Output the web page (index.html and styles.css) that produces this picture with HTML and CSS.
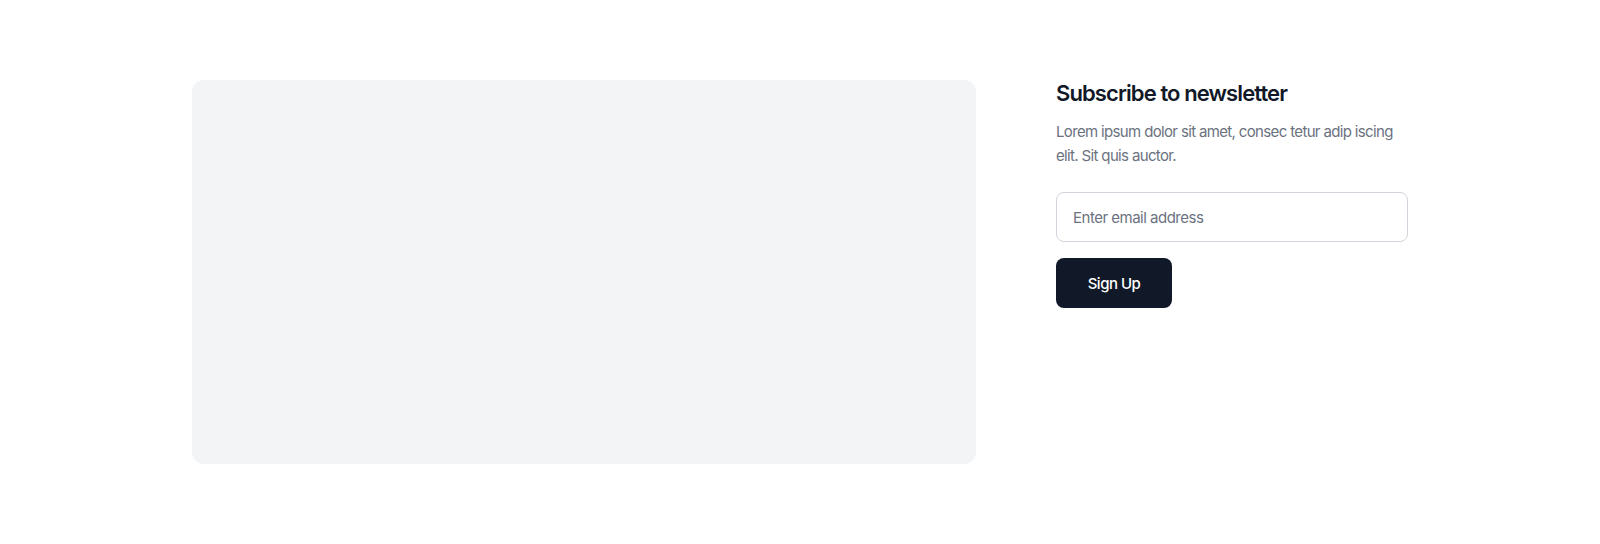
FILE: index.html
```html
<!DOCTYPE html>
<html lang="en">
<head>
    <meta charset="UTF-8">
    <meta name="viewport" content="width=device-width, initial-scale=1.0">
    <title>Newsletter</title>
    <link rel="stylesheet" href="styles.css">
</head>
<body>
    <section class="newsletter">
        <div class="newsletter-container">
            <div class="newsletter-media"></div>
            <div class="newsletter-content">
                <h2 class="newsletter-title">Subscribe to newsletter</h2>
                <p class="newsletter-text">Lorem ipsum dolor sit amet, consec tetur adip iscing elit. Sit quis auctor.</p>
                <form class="newsletter-form">
                    <input class="newsletter-input" type="email" placeholder="Enter email address">
                    <button class="newsletter-button" type="button">Sign Up</button>
                </form>
            </div>
        </div>
    </section>
</body>
</html>
```

FILE: styles.css
```css
body {
    margin: 0;
    padding: 0;
    background-color: #fff;
    font-family: 'Inter', 'Noto Sans', sans-serif;
    color: #111827;
}

.newsletter {
    padding: 80px 0;
}

.newsletter-container {
    width: 1216px;
    margin: 0 auto;
    display: grid;
    grid-template-columns: 784px 352px;
    gap: 80px;
}

.newsletter-media {
    height: 384px;
    background-color: #f3f4f6;
    border-radius: 12px;
}

.newsletter-title {
    margin: 0;
    font-size: 22px;
    line-height: 26px;
    font-weight: 600;
    letter-spacing: -0.9px;
    color: #111827;
}

.newsletter-text {
    margin: 14px 0 0;
    font-size: 15px;
    line-height: 24px;
    letter-spacing: -0.65px;
    color: #6b7280;
}

.newsletter-form {
    margin-top: 24px;
    display: flex;
    flex-direction: column;
    align-items: flex-start;
    gap: 16px;
}

.newsletter-input {
    box-sizing: border-box;
    width: 100%;
    height: 50px;
    padding: 0 16px;
    border: 1px solid #d1d5db;
    border-radius: 8px;
    font-family: inherit;
    font-size: 15px;
    letter-spacing: -0.5px;
    color: #111827;
    outline: none;
}

.newsletter-input::placeholder {
    color: #6b7280;
}

.newsletter-button {
    height: 50px;
    width: 116px;
    border: none;
    border-radius: 8px;
    background-color: #111827;
    color: #fff;
    font-family: inherit;
    font-size: 15px;
    font-weight: 500;
    letter-spacing: -0.5px;
    cursor: pointer;
}
```
